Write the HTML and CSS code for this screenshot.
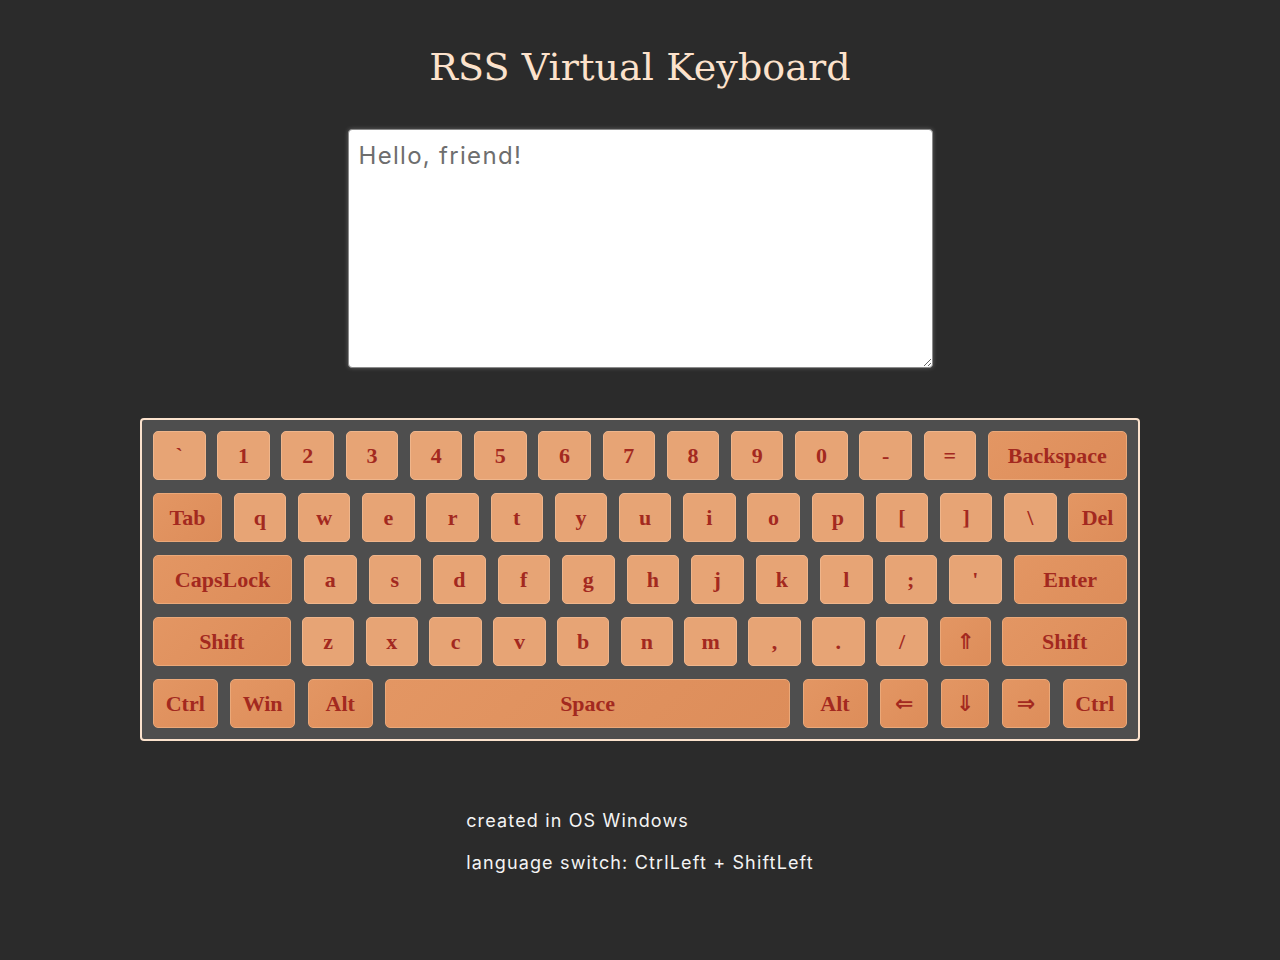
FILE: index.html
```html
<!DOCTYPE html>
<html lang="en">
<head>
<meta charset="utf-8">
<title>RSS Virtual Keyboard</title>
<link rel="stylesheet" href="styles.css">
</head>
<body>
<main class="page">
  <h1 class="title">RSS Virtual Keyboard</h1>
  <textarea class="screen" placeholder="Hello, friend!"></textarea>
  <div class="keyboard">
    <div class="row">
      <div class="key">`</div><div class="key">1</div><div class="key">2</div><div class="key">3</div><div class="key">4</div><div class="key">5</div><div class="key">6</div><div class="key">7</div><div class="key">8</div><div class="key">9</div><div class="key">0</div><div class="key">-</div><div class="key">=</div><div class="key sp w-backspace">Backspace</div>
    </div>
    <div class="row">
      <div class="key sp w-tab">Tab</div><div class="key">q</div><div class="key">w</div><div class="key">e</div><div class="key">r</div><div class="key">t</div><div class="key">y</div><div class="key">u</div><div class="key">i</div><div class="key">o</div><div class="key">p</div><div class="key">[</div><div class="key">]</div><div class="key">\</div><div class="key sp w-del">Del</div>
    </div>
    <div class="row">
      <div class="key sp w-caps">CapsLock</div><div class="key">a</div><div class="key">s</div><div class="key">d</div><div class="key">f</div><div class="key">g</div><div class="key">h</div><div class="key">j</div><div class="key">k</div><div class="key">l</div><div class="key">;</div><div class="key">'</div><div class="key sp w-enter">Enter</div>
    </div>
    <div class="row">
      <div class="key sp w-lshift">Shift</div><div class="key">z</div><div class="key">x</div><div class="key">c</div><div class="key">v</div><div class="key">b</div><div class="key">n</div><div class="key">m</div><div class="key">,</div><div class="key">.</div><div class="key">/</div><div class="key sp w-up">&#8657;</div><div class="key sp w-rshift">Shift</div>
    </div>
    <div class="row">
      <div class="key sp w-ctrl">Ctrl</div><div class="key sp w-win">Win</div><div class="key sp w-alt">Alt</div><div class="key sp w-space">Space</div><div class="key sp w-alt">Alt</div><div class="key sp w-arrow">&#8656;</div><div class="key sp w-arrow">&#8659;</div><div class="key sp w-arrow">&#8658;</div><div class="key sp w-ctrl">Ctrl</div>
    </div>
  </div>
  <div class="notes">
    <p class="note">created in OS Windows</p>
    <p class="note">language switch: CtrlLeft + ShiftLeft</p>
  </div>
</main>
</body>
</html>
```

FILE: styles.css
```css
html, body {
  margin: 0;
  padding: 0;
  background: #2b2b2b;
}

.page {
  display: flex;
  flex-direction: column;
  align-items: center;
  padding-top: 45px;
}

.title {
  margin: 0;
  font-family: "DejaVu Serif", serif;
  font-weight: normal;
  font-size: 38px;
  line-height: 44px;
  color: #fce2cc;
  letter-spacing: 0.1px;
}

.screen {
  box-sizing: border-box;
  margin-top: 40px;
  width: 585px;
  height: 239px;
  padding: 11px 10px 10px;
  border: 1px solid #8c8c8c;
  border-radius: 4px;
  background: #ffffff;
  box-shadow: 0 0 4px rgba(255, 255, 255, 0.25);
  font-family: Inter, "Noto Sans", sans-serif;
  font-size: 24px;
  letter-spacing: 1.3px;
  color: #333;
  resize: both;
  outline: none;
}

.screen::placeholder {
  color: #6e6e6e;
  opacity: 1;
}

.keyboard {
  box-sizing: border-box;
  margin-top: 50px;
  width: 1000px;
  padding: 11px;
  border: 2px solid #fbe2cd;
  border-radius: 4px;
  background: #4e4e4e;
  display: flex;
  flex-direction: column;
  gap: 13px;
}

.row {
  display: flex;
  justify-content: space-between;
}

.key {
  box-sizing: border-box;
  width: 52.5px;
  height: 49px;
  flex: none;
  display: flex;
  align-items: center;
  justify-content: center;
  border: 1.5px solid #efb58b;
  border-radius: 5px;
  background: #e7a475;
  color: #a3291f;
  font-family: "Liberation Serif", "Times New Roman", serif;
  font-weight: bold;
  font-size: 22px;
}

.key.sp {
  background: linear-gradient(135deg, #e39663 0%, #dd8d5a 100%);
  border-color: #eaa879;
}

.w-backspace { width: 139px; }
.w-tab { width: 69px; }
.w-del { width: 58.5px; }
.w-caps { width: 139px; }
.w-enter { width: 113.5px; }
.w-lshift { width: 137.5px; }
.w-up { width: 51.5px; }
.w-rshift { width: 124.5px; }
.w-ctrl { width: 64.5px; }
.w-win { width: 65.5px; }
.w-alt { width: 65px; }
.w-space { width: 405px; }
.w-arrow { width: 48.5px; }

.w-up, .w-arrow {
  font-family: "DejaVu Sans", "Liberation Serif", serif;
  font-weight: bold;
  font-size: 22px;
}

.notes {
  margin-top: 68px;
  display: flex;
  flex-direction: column;
  gap: 18px;
}

.note {
  margin: 0;
  font-family: Inter, "Noto Sans", sans-serif;
  font-size: 18px;
  line-height: 24px;
  letter-spacing: 1.15px;
  color: #f4f4f4;
}
```
